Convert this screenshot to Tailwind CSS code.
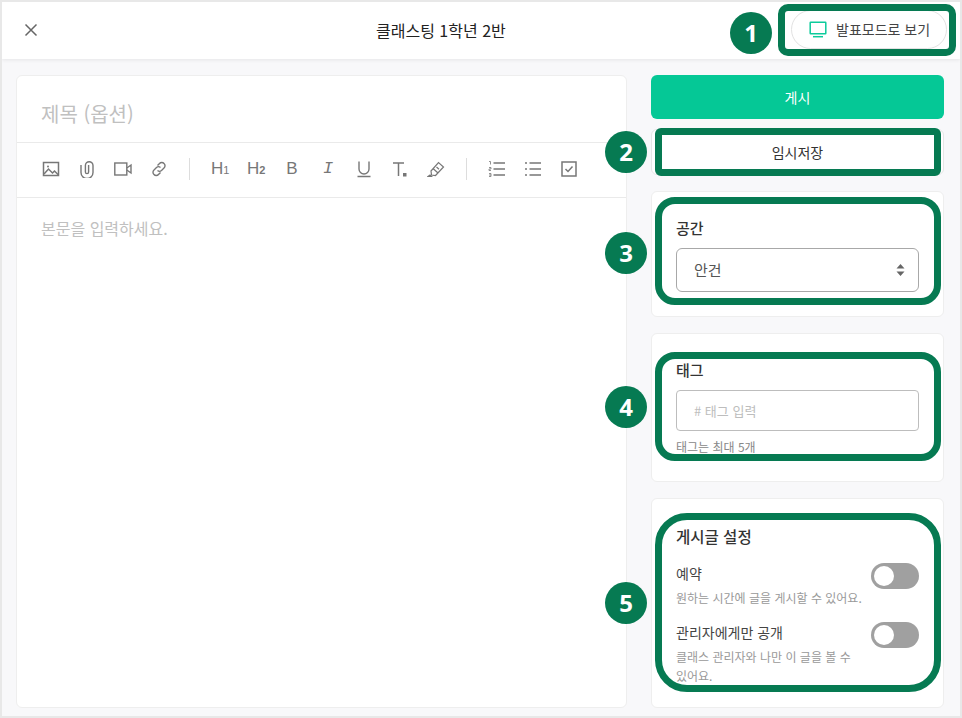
<!DOCTYPE html>
<html lang="ko">
<head>
    <meta charset="UTF-8">
    <title>게시글 작성</title>
    <script src="https://cdn.jsdelivr.net/npm/@tailwindcss/browser@4"></script>
</head>
<body class="bg-[#f8f8fa] font-['Noto_Sans_CJK_KR','Noto_Sans',sans-serif] text-[#333]">
<div class="relative w-[962px] h-[718px] overflow-hidden border-2 border-[#e8e8e8] bg-[#f8f8fa]">

    <!-- 상단 헤더 -->
    <header class="relative h-[57px] bg-white shadow-[0_1px_4px_rgba(0,0,0,0.08)] flex items-center justify-between pl-[21px] pr-[13px] pb-[2px]">
        <svg class="w-4 h-4 text-[#666]" viewBox="0 0 16 16" fill="none" stroke="currentColor" stroke-width="1.5"><path d="M2.5 2.5l11 11M13.5 2.5l-11 11"/></svg>
        <h1 class="absolute left-[374px] top-[16px] text-[16px] leading-[24px] text-[#222]">클래스팅 1학년 2반</h1>
        <button class="w-[156px] h-[39px] rounded-full border border-[#e2e2e2] flex items-center pl-[17px] gap-[9px] text-[14px] text-[#444]">
            <svg class="w-[18px] h-[17px] text-[#0ccb9b]" viewBox="0 0 18 17" fill="none" stroke="currentColor" stroke-width="1.5"><rect x="1.2" y="1.2" width="15.6" height="11.6" rx="0.5"/><path d="M4 15.7h10"/></svg>
            <span>발표모드로 보기</span>
        </button>
    </header>

    <main class="flex gap-[24px] pl-[14px] pt-[16px]">
        <!-- 에디터 -->
        <section class="w-[611px] h-[633px] bg-white rounded-md border border-[#eeeeee] flex flex-col">
            <div class="h-[67px] border-b border-[#eaeaea] flex items-center pl-[24px] text-[20px] text-[#c0c0c0] pt-[9px]">제목 (옵션)</div>
            <div class="h-[55px] border-b border-[#eaeaea] flex items-center pl-[25px] pb-[2px] text-[#777]">
                <div class="flex items-center gap-[18px]">
                    <svg class="w-[18px] h-[18px]" viewBox="0 0 18 18" fill="none" stroke="currentColor" stroke-width="1.5"><rect x="1.5" y="2.5" width="15" height="13"/><path d="M2 14l4.5-5 4 4 2-2 4 4"/><circle cx="6" cy="6.5" r="1" fill="currentColor" stroke="none"/></svg>
                    <svg class="w-[18px] h-[18px]" viewBox="0 0 18 18" fill="none" stroke="currentColor" stroke-width="1.4"><path d="M3 5v7.5a6 6 0 0012 0V5.5a3.8 3.8 0 00-7.6 0v6.5a1.6 1.6 0 003.2 0V5"/></svg>
                    <svg class="w-[18px] h-[18px]" viewBox="0 0 18 18" fill="none" stroke="currentColor" stroke-width="1.4"><rect x="0.8" y="3" width="12" height="12"/><path d="M12.8 8l4.2-3v8l-4.2-3"/></svg>
                    <svg class="w-[18px] h-[18px]" viewBox="0 0 18 18" fill="none" stroke="currentColor" stroke-width="1.4"><path d="M7.5 5.5l2-2a3 3 0 014.5 0 3 3 0 010 4.5l-2.5 2.5a3 3 0 01-4 0"/><path d="M10.5 12.5l-2 2a3 3 0 01-4.5 0 3 3 0 010-4.5l2.5-2.5a3 3 0 014 0"/></svg>
                </div>
                <div class="w-px h-[22px] bg-[#dddddd] ml-[21px] mr-[21px]"></div>
                <div class="flex items-center gap-[18px]">
                    <span class="w-[18px] text-[17px] leading-[18px] flex items-baseline font-['Liberation_Sans']">H<span class="text-[11px]">1</span></span>
                    <span class="w-[18px] text-[17px] leading-[18px] flex items-baseline font-['Liberation_Sans']">H<span class="text-[11px] font-bold">2</span></span>
                    <span class="w-[18px] text-[17px] leading-[18px] text-center font-['Liberation_Sans']">B</span>
                    <span class="w-[18px] text-[17px] leading-[18px] text-center italic font-['Liberation_Mono']">I</span>
                    <svg class="w-[18px] h-[18px]" viewBox="0 0 18 18" fill="none" stroke="currentColor" stroke-width="1.4"><path d="M4 1.5v7.5a5 5 0 0010 0V1.5M2.5 16.5h13"/></svg>
                    <svg class="w-[18px] h-[18px]" viewBox="0 0 18 18" fill="none" stroke="currentColor" stroke-width="1.5"><path d="M2 3h11M7.5 3v13"/><rect x="12" y="13" width="3.5" height="3.5" fill="currentColor" stroke="none"/></svg>
                    <svg class="w-[18px] h-[18px]" viewBox="0 0 18 18" fill="none" stroke="currentColor" stroke-width="1.2"><path d="M4 11l7.5-8.5 5 4.5-8 8.5-4-.5zM6 8.5l5 4.5M9.5 7l2.5 2.2"/><path d="M1 16.5l2-1.5 1.5 1.5z" fill="currentColor"/></svg>
                </div>
                <div class="w-px h-[22px] bg-[#dddddd] ml-[21px] mr-[21px]"></div>
                <div class="flex items-center gap-[18px]">
                    <svg class="w-[18px] h-[18px]" viewBox="0 0 18 18" fill="none" stroke="currentColor" stroke-width="1.4"><path d="M5.5 3h11.5M5.5 9h11.5M5.5 15h11.5"/><path d="M1 1.5h1.5v3M1 7.5h2v1.5H1v1.5h2M1 13.5h2v3H1M1 15h2" stroke-width="0.8"/></svg>
                    <svg class="w-[18px] h-[18px]" viewBox="0 0 18 18" fill="none" stroke="currentColor" stroke-width="1.4"><path d="M5.5 3h11.5M5.5 9h11.5M5.5 15h11.5"/><path d="M1 3h2M1 9h2M1 15h2" stroke-width="1.6"/></svg>
                    <svg class="w-[18px] h-[18px]" viewBox="0 0 18 18" fill="none" stroke="currentColor" stroke-width="1.5"><rect x="2" y="2" width="14" height="14"/><path d="M5.5 9l2.5 2.5 4.5-5"/></svg>
                </div>
            </div>
            <div class="pl-[24px] pt-[19px] text-[16px] leading-[22px] text-[#c0c0c0]">본문을 입력하세요.</div>
        </section>

        <!-- 오른쪽 패널 -->
        <aside class="w-[293px] flex flex-col">
            <button class="h-[44px] rounded-md bg-[#05c896] text-white text-[14px]">게시</button>
            <button class="h-[46px] mt-[10px] rounded-md bg-white border border-[#e6e6e6] text-[14px] text-[#333]">임시저장</button>

            <div class="h-[126px] mt-[16px] rounded-md bg-white border border-[#eeeeee] px-[24px] pt-[25px]">
                <div class="text-[15px] leading-[22px] font-medium text-[#333]">공간</div>
                <div class="mt-[9px] h-[44px] rounded-md border border-[#a8a8a8] flex items-center justify-between pl-[17px] pr-[13px] text-[15px] text-[#555]">
                    <span>안건</span>
                    <svg class="w-[9px] h-[14px] text-[#666]" viewBox="0 0 9 14" fill="currentColor"><path d="M4.5 1l4 4.5h-8zM4.5 13l4-4.5h-8z"/></svg>
                </div>
            </div>

            <div class="h-[149px] mt-[16px] rounded-md bg-white border border-[#eeeeee] px-[24px] pt-[25px]">
                <div class="text-[15px] leading-[22px] font-medium text-[#333]">태그</div>
                <div class="mt-[9px] h-[41px] rounded-[4px] border border-[#bdbdbd] flex items-center pl-[17px] text-[13px] text-[#bdbdbd]"># 태그 입력</div>
                <div class="mt-[8px] text-[12px] leading-[16px] text-[#888]">태그는 최대 5개</div>
            </div>

            <div class="h-[210px] mt-[16px] rounded-md bg-white border border-[#eeeeee] px-[24px] pt-[26px]">
                <div class="text-[15.5px] leading-[22px] font-medium text-[#333]">게시글 설정</div>
                <div class="mt-[16px] flex justify-between">
                    <div class="w-[188px]">
                        <div class="text-[14px] leading-[20px] text-[#444]">예약</div>
                        <p class="mt-[5px] text-[12px] leading-[19px] text-[#999] whitespace-nowrap">원하는 시간에 글을 게시할 수 있어요.</p>
                    </div>
                    <div class="w-[48px] h-[26px] shrink-0 rounded-full bg-[#a0a0a0] p-[3px]"><div class="w-[20px] h-[20px] rounded-full bg-white"></div></div>
                </div>
                <div class="mt-[15px] flex justify-between">
                    <div class="w-[178px]">
                        <div class="text-[14px] leading-[20px] text-[#444]">관리자에게만 공개</div>
                        <p class="mt-[5px] text-[12px] leading-[19px] text-[#999]">클래스 관리자와 나만 이 글을 볼 수 있어요.</p>
                    </div>
                    <div class="w-[48px] h-[26px] shrink-0 rounded-full bg-[#a0a0a0] p-[3px]"><div class="w-[20px] h-[20px] rounded-full bg-white"></div></div>
                </div>
            </div>
        </aside>
    </main>

    <!-- 안내 표시 (스크린샷 위 주석) -->
    <div class="absolute left-[776px] top-[2px] w-[178px] h-[52px] rounded-[10px] border-[7px] border-[#067a52]"></div>
    <div class="absolute left-[653px] top-[126px] w-[286px] h-[48px] rounded-md border-[7px] border-[#067a52]"></div>
    <div class="absolute left-[653px] top-[195px] w-[286px] h-[108px] rounded-[20px] border-[7px] border-[#067a52]"></div>
    <div class="absolute left-[653px] top-[350px] w-[286px] h-[109px] rounded-[20px] border-[7px] border-[#067a52]"></div>
    <div class="absolute left-[653px] top-[511px] w-[286px] h-[179px] rounded-[32px] border-[7px] border-[#067a52]"></div>

    <div class="absolute left-[728px] top-[10px] w-[42px] h-[42px] rounded-full bg-[#067a52] flex items-center justify-center text-white text-[24px] font-bold font-['Open_Sans']">1</div>
    <div class="absolute left-[603px] top-[129px] w-[42px] h-[42px] rounded-full bg-[#067a52] flex items-center justify-center text-white text-[24px] font-bold font-['Open_Sans']">2</div>
    <div class="absolute left-[603px] top-[230px] w-[42px] h-[42px] rounded-full bg-[#067a52] flex items-center justify-center text-white text-[24px] font-bold font-['Open_Sans']">3</div>
    <div class="absolute left-[603px] top-[384px] w-[42px] h-[42px] rounded-full bg-[#067a52] flex items-center justify-center text-white text-[24px] font-bold font-['Open_Sans']">4</div>
    <div class="absolute left-[603px] top-[580px] w-[42px] h-[42px] rounded-full bg-[#067a52] flex items-center justify-center text-white text-[24px] font-bold font-['Open_Sans']">5</div>
</div>
</body>
</html>
